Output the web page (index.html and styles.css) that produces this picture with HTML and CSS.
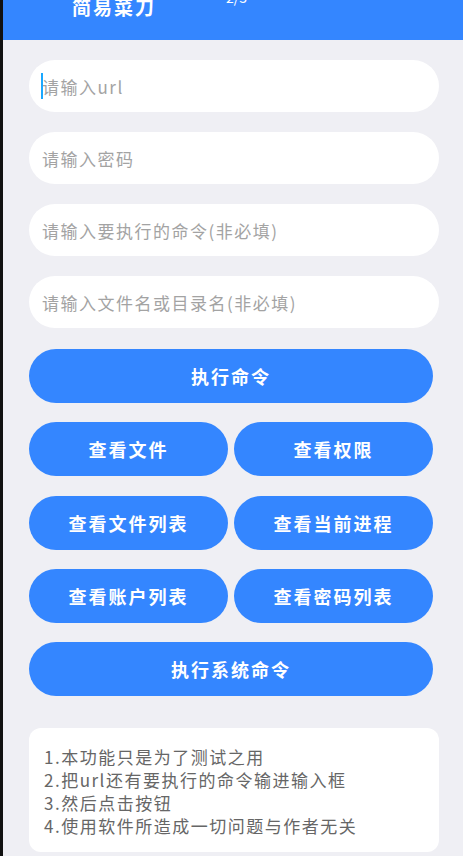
FILE: index.html
```html
<!DOCTYPE html>
<html lang="zh-CN">
<head>
  <meta charset="UTF-8">
  <meta name="viewport" content="width=device-width, initial-scale=1.0">
  <title>简易菜刀</title>
  <link rel="stylesheet" href="styles.css">
</head>
<body>
  <div class="header">
    <span class="title">简易菜刀</span>
    <span class="pager">2/3</span>
  </div>

  <div class="content">
    <div class="field-wrap focused">
      <input class="field" type="text" placeholder="请输入url">
    </div>
    <input class="field" type="password" placeholder="请输入密码">
    <input class="field" type="text" placeholder="请输入要执行的命令(非必填)">
    <input class="field" type="text" placeholder="请输入文件名或目录名(非必填)">

    <div class="buttons">
      <button class="btn wide">执行命令</button>
      <button class="btn">查看文件</button>
      <button class="btn">查看权限</button>
      <button class="btn">查看文件列表</button>
      <button class="btn">查看当前进程</button>
      <button class="btn">查看账户列表</button>
      <button class="btn">查看密码列表</button>
      <button class="btn wide">执行系统命令</button>
    </div>

    <div class="notes">
      <p>1.本功能只是为了测试之用</p>
      <p>2.把url还有要执行的命令输进输入框</p>
      <p>3.然后点击按钮</p>
      <p>4.使用软件所造成一切问题与作者无关</p>
    </div>
  </div>
</body>
</html>
```

FILE: styles.css
```css
body {
  margin: 0;
  height: 856px;
  overflow: hidden;
  background-color: #efeff4;
  border-left: 3px solid #111;
  font-family: "Noto Sans CJK SC", "Noto Sans", sans-serif;
}
.header {
  height: 40px;
  background-color: #3486ff;
  display: flex;
  align-items: flex-start;
  color: white;
}
.title {
  margin-left: 69px;
  margin-top: -5px;
  font-size: 19px;
  font-weight: bold;
  letter-spacing: 2px;
  line-height: 24px;
}
.pager {
  margin-left: 70px;
  margin-top: -11px;
  font-size: 14px;
  line-height: 16px;
}
.content {
  padding: 20px 24px 0 26px;
  display: flex;
  flex-direction: column;
}
.field-wrap {
  position: relative;
  display: flex;
  flex-direction: column;
}
.field-wrap .field {
  margin-bottom: 0;
}
.field-wrap {
  margin-bottom: 20px;
}
.focused::before {
  content: "";
  position: absolute;
  left: 12px;
  top: 13px;
  width: 2px;
  height: 26px;
  background-color: #1aa8ff;
}
.field {
  height: 52px;
  margin-bottom: 20px;
  border: none;
  border-radius: 26px;
  background-color: white;
  padding: 0 13px;
  font-family: inherit;
  font-size: 17px;
  letter-spacing: 1.5px;
  outline: none;
}
.field::placeholder {
  color: #a3a3a3;
}
.buttons {
  display: grid;
  grid-template-columns: 1fr 1fr;
  gap: 19.25px 6px;
  margin-top: 1px;
  margin-right: 6px;
}
.btn {
  height: 54px;
  border: none;
  border-radius: 27px;
  background-color: #3486ff;
  color: white;
  font-family: inherit;
  font-size: 18px;
  font-weight: bold;
  letter-spacing: 2px;
  cursor: pointer;
}
.wide {
  grid-column: span 2;
}
.notes {
  margin-top: 32px;
  background-color: white;
  border-radius: 12px;
  padding: 17px 15px 15px;
  color: #666;
  font-size: 17px;
  line-height: 23px;
  letter-spacing: 1.5px;
}
.notes p {
  margin: 0;
}
```
